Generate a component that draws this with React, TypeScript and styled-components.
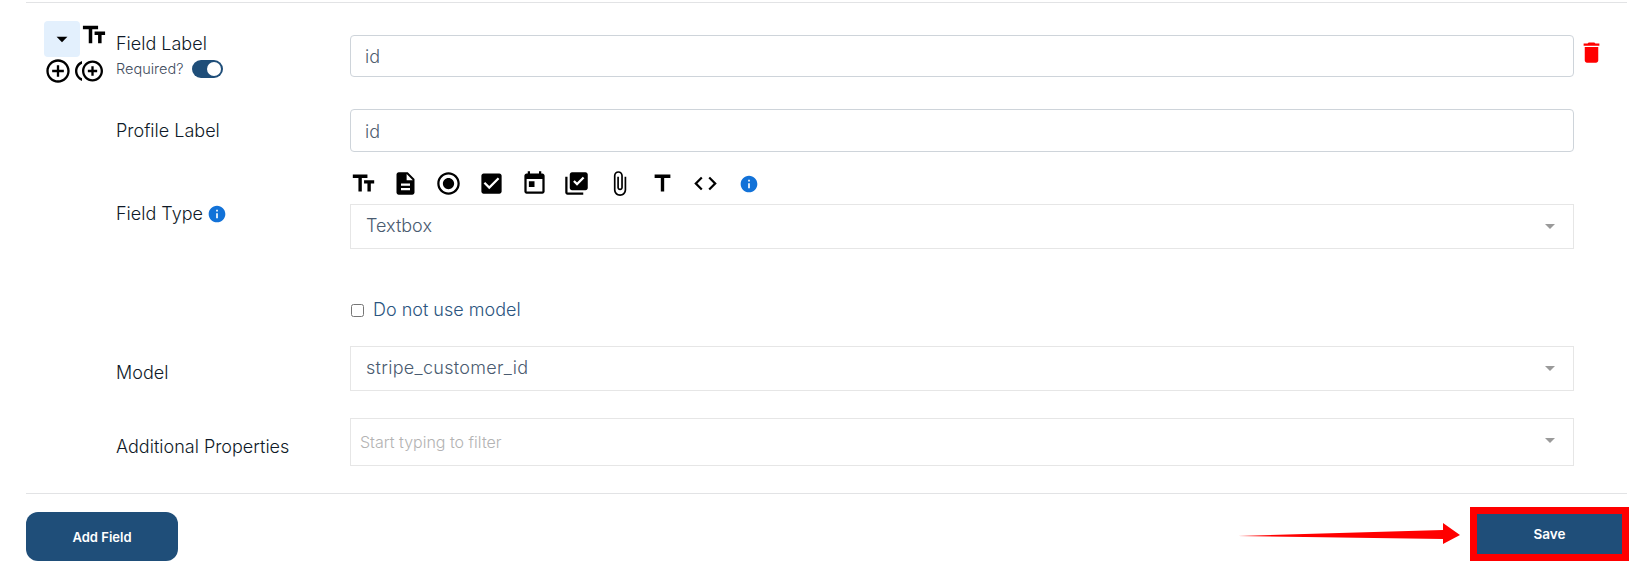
import React from "react";
import styled, { createGlobalStyle } from "styled-components";

const Global = createGlobalStyle`
  html, body { margin: 0; padding: 0; background: #fff; }
  body { font-family: "Inter", "Liberation Sans", sans-serif; font-weight: 300; color: #14202e; }
`;

const Page = styled.div`
  position: relative;
  width: 1649px;
  height: 574px;
  overflow: hidden;
`;
const Rule = styled.div<{ $top: number }>`
  height: 1px;
  background: #e2e3e5;
  margin: ${(p) => p.$top}px 22px 0 26px;
`;
const Row = styled.div<{ $top: number; $h: number }>`
  display: grid;
  grid-template-columns: 116px 234px 1224px 1fr;
  margin-top: ${(p) => p.$top}px;
  min-height: ${(p) => p.$h}px;
`;
const Cell = styled.div`
  grid-column: 3;
`;
const LabelCell = styled.div<{ $pad: number }>`
  grid-column: 2;
  padding-top: ${(p) => p.$pad}px;
`;
const LiftedLabelCell = styled(LabelCell)`
  margin: -2px 0 -2px;
`;
const Label = styled.div`
  display: flex;
  align-items: center;
  gap: 4px;
  font-size: 18px;
  line-height: 22px;
  color: #0f1a28;
  white-space: nowrap;
`;
const SubLabel = styled.div`
  display: flex;
  align-items: center;
  gap: 9px;
  margin-top: 5px;
  font-size: 14.5px;
  line-height: 18px;
  color: #3f4d5e;
`;
const Toggle = styled.span`
  position: relative;
  display: inline-block;
  width: 31px;
  height: 18px;
  border-radius: 9px;
  background: #1f4e79;
  &::after {
    content: "";
    position: absolute;
    right: 2px;
    top: 2px;
    width: 14px;
    height: 14px;
    border-radius: 50%;
    background: #fff;
  }
`;
const Handle = styled.div`
  grid-column: 1;
  position: relative;
  display: grid;
  grid-template-columns: 36px 32px;
  grid-template-rows: 36px 30px;
  margin: -14px 0 -10px 44px;
  width: 68px;
`;
const HandleBox = styled.div`
  display: flex;
  align-items: center;
  justify-content: center;
  background: #e3f0fd;
  border-radius: 4px;
`;
const HandleIcon = styled.div<{ $shift?: number }>`
  display: flex;
  align-items: flex-start;
  justify-content: flex-start;
  margin-left: ${(p) => p.$shift ?? 0}px;
`;
const TextInput = styled.div<{ $h: number }>`
  box-sizing: border-box;
  display: flex;
  align-items: center;
  height: ${(p) => p.$h}px;
  padding: 1px 14px 0;
  border: 1px solid #ced4da;
  border-radius: 4px;
  font-size: 18px;
  color: #4f5e70;
`;
const Select = styled.div<{ $h: number; $pad?: number; $muted?: boolean; $wide?: boolean }>`
  box-sizing: border-box;
  position: relative;
  display: flex;
  align-items: center;
  height: ${(p) => p.$h}px;
  padding: 0 ${(p) => p.$pad ?? 15}px ${(p) => (p.$muted ? 0 : 3)}px;
  border: 1px solid #e6e6e6;
  font-size: ${(p) => (p.$muted ? 16 : 18)}px;
  letter-spacing: ${(p) => (p.$wide ? 0.3 : 0)}px;
  color: ${(p) => (p.$muted ? "#b3b3b3" : "#4a5b70")};
  &::after {
    content: "";
    position: absolute;
    right: 18px;
    top: 19px;
    border: 5px solid transparent;
    border-top-color: #9a9a9a;
    border-bottom: 0;
  }
`;
const IconBar = styled.div`
  display: flex;
  align-items: center;
  gap: 15.8px;
  height: 27px;
  padding-top: 1px;
  margin: 0 0 7px -0.5px;
`;
const InfoSlot = styled.span`
  display: block;
  margin-left: 4px;
`;
const CheckRow = styled.label`
  display: flex;
  align-items: center;
  gap: 9px;
  margin-left: 1px;
  font-size: 18px;
  line-height: 22px;
  color: #2b5580;
`;
const CheckBoxMark = styled.span`
  box-sizing: border-box;
  width: 13px;
  height: 13px;
  border: 1px solid #767676;
  border-radius: 2.5px;
  background: #fff;
`;
const TrashCell = styled.div`
  grid-column: 4;
  padding: 4px 0 0 4px;
`;
const Footer = styled.div`
  display: flex;
  align-items: flex-start;
  justify-content: space-between;
  margin-top: 13px;
  padding: 0 20px 0 26px;
`;
const AddButton = styled.button`
  width: 152px;
  height: 49px;
  margin-top: 5px;
  border: 0;
  border-radius: 12px;
  background: #1f4e79;
  color: #fff;
  font: 600 13px "Inter", sans-serif;
`;
const SaveButton = styled.button`
  box-sizing: border-box;
  width: 159px;
  height: 54px;
  border: 7px solid #ff0000;
  background: #1f4e79;
  color: #fff;
  font: 600 13.5px "Inter", sans-serif;
`;
const Arrow = styled.svg`
  position: absolute;
  left: 1238px;
  top: 520px;
`;

const P = {
  text: "M2.5 4v3h5v12h3V7h5V4H2.5zm19 5h-9v3h3v7h3v-7h3V9z",
  doc: "M14 2H6c-1.1 0-1.99.9-1.99 2L4 20c0 1.1.89 2 1.99 2H18c1.1 0 2-.9 2-2V8l-6-6zm2 16H8v-2h8v2zm0-4H8v-2h8v2zm-3-5V3.5L18.5 9H13z",
  radio: "M12 7c-2.76 0-5 2.24-5 5s2.24 5 5 5 5-2.24 5-5-2.24-5-5-5zm0-5C6.48 2 2 6.48 2 12s4.48 10 10 10 10-4.48 10-10S17.52 2 12 2zm0 18c-4.42 0-8-3.58-8-8s3.58-8 8-8 8 3.58 8 8-3.58 8-8 8z",
  check: "M19 3H5c-1.11 0-2 .9-2 2v14c0 1.1.89 2 2 2h14c1.11 0 2-.9 2-2V5c0-1.1-.89-2-2-2zm-9 14l-5-5 1.41-1.41L10 14.17l7.59-7.59L19 8l-9 9z",
  today: "M19 3h-1V1h-2v2H8V1H6v2H5c-1.11 0-1.99.9-1.99 2L3 19c0 1.1.89 2 2 2h14c1.1 0 2-.9 2-2V5c0-1.1-.9-2-2-2zm0 16H5V8h14v11zM7 10h5v5H7z",
  lib: "M20 2H8c-1.1 0-2 .9-2 2v12c0 1.1.9 2 2 2h12c1.1 0 2-.9 2-2V4c0-1.1-.9-2-2-2zm-7.53 12L9 10.5l1.4-1.41 2.07 2.08L17.6 6 19 7.41 12.47 14zM4 6H2v14c0 1.1.9 2 2 2h14v-2H4V6z",
  attach: "M16.5 6v11.5c0 2.21-1.79 4-4 4s-4-1.79-4-4V5c0-1.38 1.12-2.5 2.5-2.5s2.5 1.12 2.5 2.5v10.5c0 .55-.45 1-1 1s-1-.45-1-1V6H10v9.5c0 1.38 1.12 2.5 2.5 2.5s2.5-1.12 2.5-2.5V5c0-2.21-1.79-4-4-4S7 2.79 7 5v12.5c0 3.04 2.46 5.5 5.5 5.5s5.5-2.46 5.5-5.5V6h-1.5z",
  title: "M5 4v3h5.5v12h3V7H19V4z",
  code: "M9.4 16.6L4.8 12l4.6-4.6L8 6l-6 6 6 6 1.4-1.4zm5.2 0l4.6-4.6-4.6-4.6L16 6l6 6-6 6-1.4-1.4z",
  info: "M12 2C6.48 2 2 6.48 2 12s4.48 10 10 10 10-4.48 10-10S17.52 2 12 2zm1 15h-2v-6h2v6zm0-8h-2V7h2v2z",
  add: "M13 7h-2v4H7v2h4v4h2v-4h4v-2h-4V7zm-1-5C6.48 2 2 6.48 2 12s4.48 10 10 10 10-4.48 10-10S17.52 2 12 2zm0 18c-4.41 0-8-3.59-8-8s3.59-8 8-8 8 3.59 8 8-3.59 8-8 8z",
  dup: "M16 8h-2v3h-3v2h3v3h2v-3h3v-2h-3zM2 12c0-2.79 1.64-5.2 4.01-6.32V3.52C2.52 4.76 0 8.09 0 12s2.52 7.24 6.01 8.48v-2.16C3.64 17.2 2 14.79 2 12zm13-9c-4.96 0-9 4.04-9 9s4.04 9 9 9 9-4.04 9-9-4.04-9-9-9zm0 16c-3.86 0-7-3.14-7-7s3.14-7 7-7 7 3.14 7 7-3.14 7-7 7z",
  trash: "M6 19c0 1.1.9 2 2 2h8c1.1 0 2-.9 2-2V7H6v12zM19 4h-3.5l-1-1h-5l-1 1H5v2h14V4z",
  drop: "M7 10l5 5 5-5z",
};

const Icon = ({ d, size = 27, color = "#000" }: { d: string; size?: number; color?: string }) => (
  <svg width={size} height={size} viewBox="0 0 24 24" fill={color} style={{ flex: "none", display: "block" }}>
    <path d={d} />
  </svg>
);

export default function App() {
  return (
    <Page>
      <Global />
      <Rule $top={2} />
      <Row $top={32} $h={42}>
        <Handle>
          <HandleBox>
            <Icon d={P.drop} size={26} />
          </HandleBox>
          <HandleIcon>
            <Icon d={P.text} size={28} />
          </HandleIcon>
          <HandleIcon>
            <Icon d={P.add} size={28} />
          </HandleIcon>
          <HandleIcon $shift={-5}>
            <Icon d={P.dup} size={28} />
          </HandleIcon>
        </Handle>
        <LiftedLabelCell $pad={0}>
          <Label>Field Label</Label>
          <SubLabel>
            Required?
            <Toggle />
          </SubLabel>
        </LiftedLabelCell>
        <Cell>
          <TextInput $h={42}>id</TextInput>
        </Cell>
        <TrashCell>
          <Icon d={P.trash} color="#ff0000" />
        </TrashCell>
      </Row>
      <Row $top={32} $h={43}>
        <LabelCell $pad={11}>
          <Label>Profile Label</Label>
        </LabelCell>
        <Cell>
          <TextInput $h={43}>id</TextInput>
        </Cell>
      </Row>
      <Row $top={17} $h={80}>
        <LabelCell $pad={34}>
          <Label>
            Field Type
            <Icon d={P.info} size={20} color="#1272d8" />
          </Label>
        </LabelCell>
        <Cell>
          <IconBar>
            <Icon d={P.text} />
            <Icon d={P.doc} />
            <Icon d={P.radio} />
            <Icon d={P.check} />
            <Icon d={P.today} />
            <Icon d={P.lib} />
            <Icon d={P.attach} />
            <Icon d={P.title} />
            <Icon d={P.code} />
            <InfoSlot>
              <Icon d={P.info} size={20} color="#1272d8" />
            </InfoSlot>
          </IconBar>
          <Select $h={45}>Textbox</Select>
        </Cell>
      </Row>
      <Row $top={50} $h={22}>
        <Cell>
          <CheckRow>
            <CheckBoxMark />
            Do not use model
          </CheckRow>
        </Cell>
      </Row>
      <Row $top={25} $h={45}>
        <LabelCell $pad={16}>
          <Label>Model</Label>
        </LabelCell>
        <Cell>
          <Select $h={45} $wide>
            stripe_customer_id
          </Select>
        </Cell>
      </Row>
      <Row $top={27} $h={48}>
        <LabelCell $pad={18}>
          <Label>Additional Properties</Label>
        </LabelCell>
        <Cell>
          <Select $h={48} $pad={9} $muted>
            Start typing to filter
          </Select>
        </Cell>
      </Row>
      <Rule $top={27} />
      <Footer>
        <AddButton>Add Field</AddButton>
        <SaveButton>Save</SaveButton>
      </Footer>
      <Arrow width="224" height="28" viewBox="0 0 224 28">
        <polygon points="0,16 205,10 205,3 222,15 205,24 205,19" fill="#ff0000" />
      </Arrow>
    </Page>
  );
}
